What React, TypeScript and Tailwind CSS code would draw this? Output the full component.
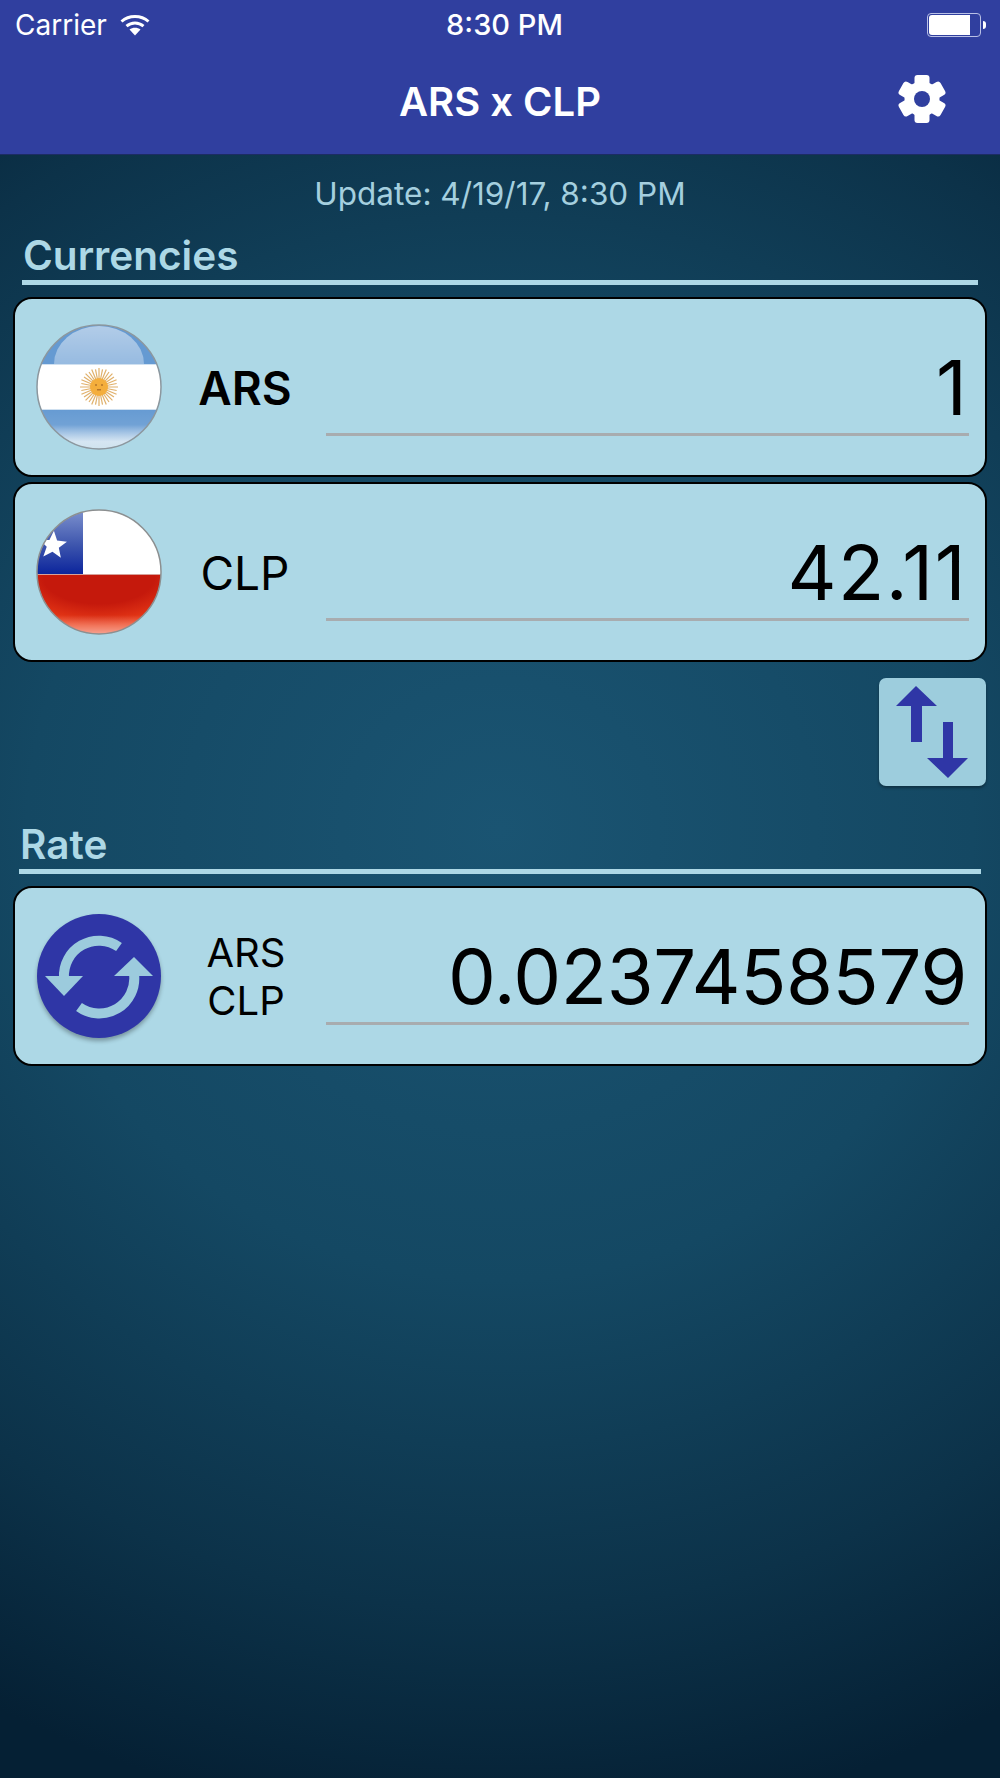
import * as React from "react";

function WifiIcon(): React.ReactElement {
  return (
    <svg width="30" height="22" viewBox="0 0 30 22" fill="none" className="ml-[13px]">
      <path d="M1.5 7.5C9 .8 21 .8 28.5 7.5" stroke="white" strokeWidth="3" />
      <path d="M6.5 12.2C11.5 8 18.5 8 23.500 12.2" stroke="white" strokeWidth="3" />
      <path d="M9.500 15.500C12.500 13 17.500 13 20.500 15.500L15 21.500Z" fill="white" />
    </svg>
  );
}

function BatteryIcon(): React.ReactElement {
  return (
    <div className="flex items-center">
      <div className="w-[54px] h-[24px] rounded-[4px] border border-[#b9c0e6] p-[1px]">
        <div className="w-[41px] h-full rounded-l-[3px] bg-white" />
      </div>
      <div className="w-[3px] h-[8px] ml-[2px] rounded-r-full bg-white" />
    </div>
  );
}

function GearIcon(): React.ReactElement {
  return (
    <svg width="50" height="50" viewBox="0 0 50 50" className="blur-[0.7px]">
      {[0, 60, 120].map((a) => (
        <rect key={a} x="17.500" y="1" width="15" height="48" rx="3" fill="white" transform={`rotate(${a} 25 25)`} />
      ))}
      <circle cx="25" cy="25" r="17.500" fill="white" />
      <circle cx="25" cy="25" r="8" fill="#303f9f" />
    </svg>
  );
}

function ArgentinaFlag(): React.ReactElement {
  const rays = Array.from({ length: 32 }, (_, i) => (i * 360) / 32);
  return (
    <svg width="126" height="126" viewBox="0 0 126 126" className="shrink-0">
      <defs>
        <clipPath id="ar-clip">
          <circle cx="63" cy="63" r="62" />
        </clipPath>
        <linearGradient id="ar-top" x1="0" y1="0" x2="0" y2="1">
          <stop offset="0" stopColor="white" stopOpacity="0.5" />
          <stop offset="1" stopColor="white" stopOpacity="0.15" />
        </linearGradient>
        <linearGradient id="ar-bot" x1="0" y1="0" x2="0" y2="1">
          <stop offset="0" stopColor="white" stopOpacity="0" />
          <stop offset="0.4" stopColor="white" stopOpacity="0.08" />
          <stop offset="0.8" stopColor="#e9f3f8" stopOpacity="0.85" />
          <stop offset="1" stopColor="#d3e6ee" stopOpacity="0.95" />
        </linearGradient>
      </defs>
      <g clipPath="url(#ar-clip)">
        <rect width="126" height="126" fill="#659ad2" />
        <ellipse cx="63" cy="40" rx="45" ry="38" fill="url(#ar-top)" />
        <rect y="84" width="126" height="42" fill="url(#ar-bot)" />
        <rect y="40" width="126" height="46" fill="white" />
        <rect y="40" width="126" height="1" fill="#cfe0f0" />
        <rect y="85" width="126" height="1" fill="#cfe0f0" />
        {rays.map((a, i) => (
          <line
            key={a}
            x1="63"
            y1="63"
            x2="63"
            y2={i % 2 ? 45 : 44}
            stroke="#e0b06a"
            strokeWidth="1.200"
            transform={`rotate(${a} 63 63)`}
          />
        ))}
        <circle cx="63" cy="63" r="9" fill="#f4ae3c" />
        <circle cx="60" cy="61" r="1" fill="#b5762a" />
        <circle cx="66" cy="61" r="1" fill="#b5762a" />
        <rect x="61" y="65" width="4" height="1.500" fill="#b5762a" />
      </g>
      <circle cx="63" cy="63" r="62" fill="none" stroke="#8c979e" strokeWidth="1.500" />
    </svg>
  );
}

function ChileFlag(): React.ReactElement {
  return (
    <svg width="126" height="126" viewBox="0 0 126 126" className="shrink-0">
      <defs>
        <clipPath id="cl-clip">
          <circle cx="63" cy="63" r="62" />
        </clipPath>
        <linearGradient id="cl-blue" x1="0" y1="0" x2="0" y2="1">
          <stop offset="0" stopColor="#7f93cf" />
          <stop offset="0.55" stopColor="#3d55ad" />
          <stop offset="1" stopColor="#0a239c" />
        </linearGradient>
        <radialGradient id="cl-red" cx="0.5" cy="0.05" r="0.8">
          <stop offset="0.55" stopColor="#c5190c" />
          <stop offset="1" stopColor="#ec3d18" />
        </radialGradient>
        <linearGradient id="cl-shine" x1="0" y1="0" x2="0" y2="1">
          <stop offset="0" stopColor="white" stopOpacity="0" />
          <stop offset="1" stopColor="white" stopOpacity="0.55" />
        </linearGradient>
      </defs>
      <g clipPath="url(#cl-clip)">
        <rect width="126" height="66" fill="white" />
        <rect width="47" height="66" fill="url(#cl-blue)" />
        <polygon
          points="17,23 20.500,31.500 29.500,32 22.500,38 25,47 17,42 9,47 11.500,38 4.500,32 13.500,31.500"
          fill="white"
          transform="translate(-1.700 -3.500) scale(1.100) rotate(4 17 35)"
        />
        <rect y="65" width="126" height="61" fill="url(#cl-red)" />
        <rect y="65" width="126" height="1" fill="#d7a09a" />
        <rect y="106" width="126" height="20" fill="url(#cl-shine)" />
      </g>
      <circle cx="63" cy="63" r="62" fill="none" stroke="#8c8f90" strokeWidth="1.500" />
    </svg>
  );
}

function SyncIcon(): React.ReactElement {
  return (
    <div className="w-[124px] h-[124px] shrink-0 rounded-full bg-[#2f36a6] shadow-[0_3px_4px_rgba(0,0,0,0.3)] ml-[1px]">
      <svg width="124" height="124" viewBox="0 0 124 124" fill="none">
        <path d="M82 33A35 35 0 0 0 27 64" stroke="#9ccbdd" strokeWidth="10" />
        <polygon points="8,62 46,62 27,82" fill="#9ccbdd" />
        <path d="M42 93A35 35 0 0 0 97 60" stroke="#9ccbdd" strokeWidth="10" />
        <polygon points="77,62 116,62 97,43" fill="#9ccbdd" />
      </svg>
    </div>
  );
}

function SwapButton(): React.ReactElement {
  return (
    <div className="w-[107px] h-[108px] rounded-[7px] bg-[#9dcddd] shadow-[0_2px_3px_rgba(0,0,0,0.35)]">
      <svg width="107" height="108" viewBox="0 0 107 108">
        <polygon points="37,8 58,28 43,28 43,64 32,64 32,28 17,28" fill="#2f36a6" />
        <polygon points="64,44 74,44 74,80 89,80 69,100 48,80 64,80" fill="#2f36a6" />
      </svg>
    </div>
  );
}

function ValueField({ value, tracking }: { value: string; tracking: string }): React.ReactElement {
  return (
    <div className={`flex-1 self-end h-[90px] mb-[39px] pb-[6px] flex items-center justify-end pr-[2px] border-b-[3px] border-[#a8acaf] text-[76px] leading-none text-black ${tracking}`}>
      {value}
    </div>
  );
}

function Card({ children }: { children: React.ReactNode }): React.ReactElement {
  return (
    <div className="mx-[13px] h-[180px] flex items-center pl-[21px] pr-[16px] rounded-[19px] border-2 border-black bg-[#add8e6]">
      {children}
    </div>
  );
}

function SectionTitle({ title, className }: { title: string; className: string }): React.ReactElement {
  return (
    <div className={className}>
      <div className="text-[40.5px] leading-[45px] pb-[2px] font-semibold text-[#add8e6] px-[1px]">{title}</div>
      <div className="h-[5px] bg-[#add8e6]" />
    </div>
  );
}

export default function App(): React.ReactElement {
  return (
    <div
      className="w-[1000px] h-[1778px] flex flex-col overflow-hidden bg-[radial-gradient(ellipse_1050px_1000px_at_500px_830px,#1a5472_0%,#144863_45%,#0c3249_78%,#052034_100%)]"
      style={{ fontFamily: "Inter, sans-serif" }}
    >
      <header className="h-[155px] shrink-0 bg-[#303f9f] text-white border-b border-[#1c2c63]">
        <div className="h-[50px] flex items-center justify-between pl-[15px] pr-[14px] relative">
          <div className="flex items-center text-[28px]">
            Carrier
            <WifiIcon />
          </div>
          <div className="absolute left-[9px] right-0 text-center text-[29px] font-medium">8:30 PM</div>
          <BatteryIcon />
        </div>
        <div className="h-[104px] flex items-center justify-center relative">
          <div className="text-[40px] font-semibold">ARS x CLP</div>
          <div className="absolute right-[53px] top-[24px]">
            <GearIcon />
          </div>
        </div>
      </header>

      <div className="text-center text-[31.5px] leading-[36px] text-[#a4cfdf] mt-[21px]">
        Update: 4/19/17, 8:30 PM
      </div>

      <SectionTitle title="Currencies" className="mx-[22px] mt-[21px]" />

      <div className="flex flex-col gap-[5px] mt-[12px]">
        <Card>
          <ArgentinaFlag />
          <div className="w-[164px] pl-[2px] mt-[3px] text-center text-[46px] font-semibold text-black">ARS</div>
          <ValueField value="1" tracking="tracking-normal" />
        </Card>
        <Card>
          <ChileFlag />
          <div className="w-[164px] pl-[2px] mt-[2px] text-center text-[46px] text-black">CLP</div>
          <ValueField value="42.11" tracking="tracking-[1.4px]" />
        </Card>
      </div>

      <div className="flex justify-end mr-[14px] mt-[16px]">
        <SwapButton />
      </div>

      <SectionTitle title="Rate" className="mx-[19px] mt-[36px]" />

      <div className="mt-[12px]">
        <Card>
          <SyncIcon />
          <div className="w-[165px] pl-[5px] mt-[1px] text-center text-[40px] leading-[48px] text-black">
            <div>ARS</div>
            <div>CLP</div>
          </div>
          <ValueField value="0.0237458579" tracking="tracking-[-0.4px]" />
        </Card>
      </div>
    </div>
  );
}
